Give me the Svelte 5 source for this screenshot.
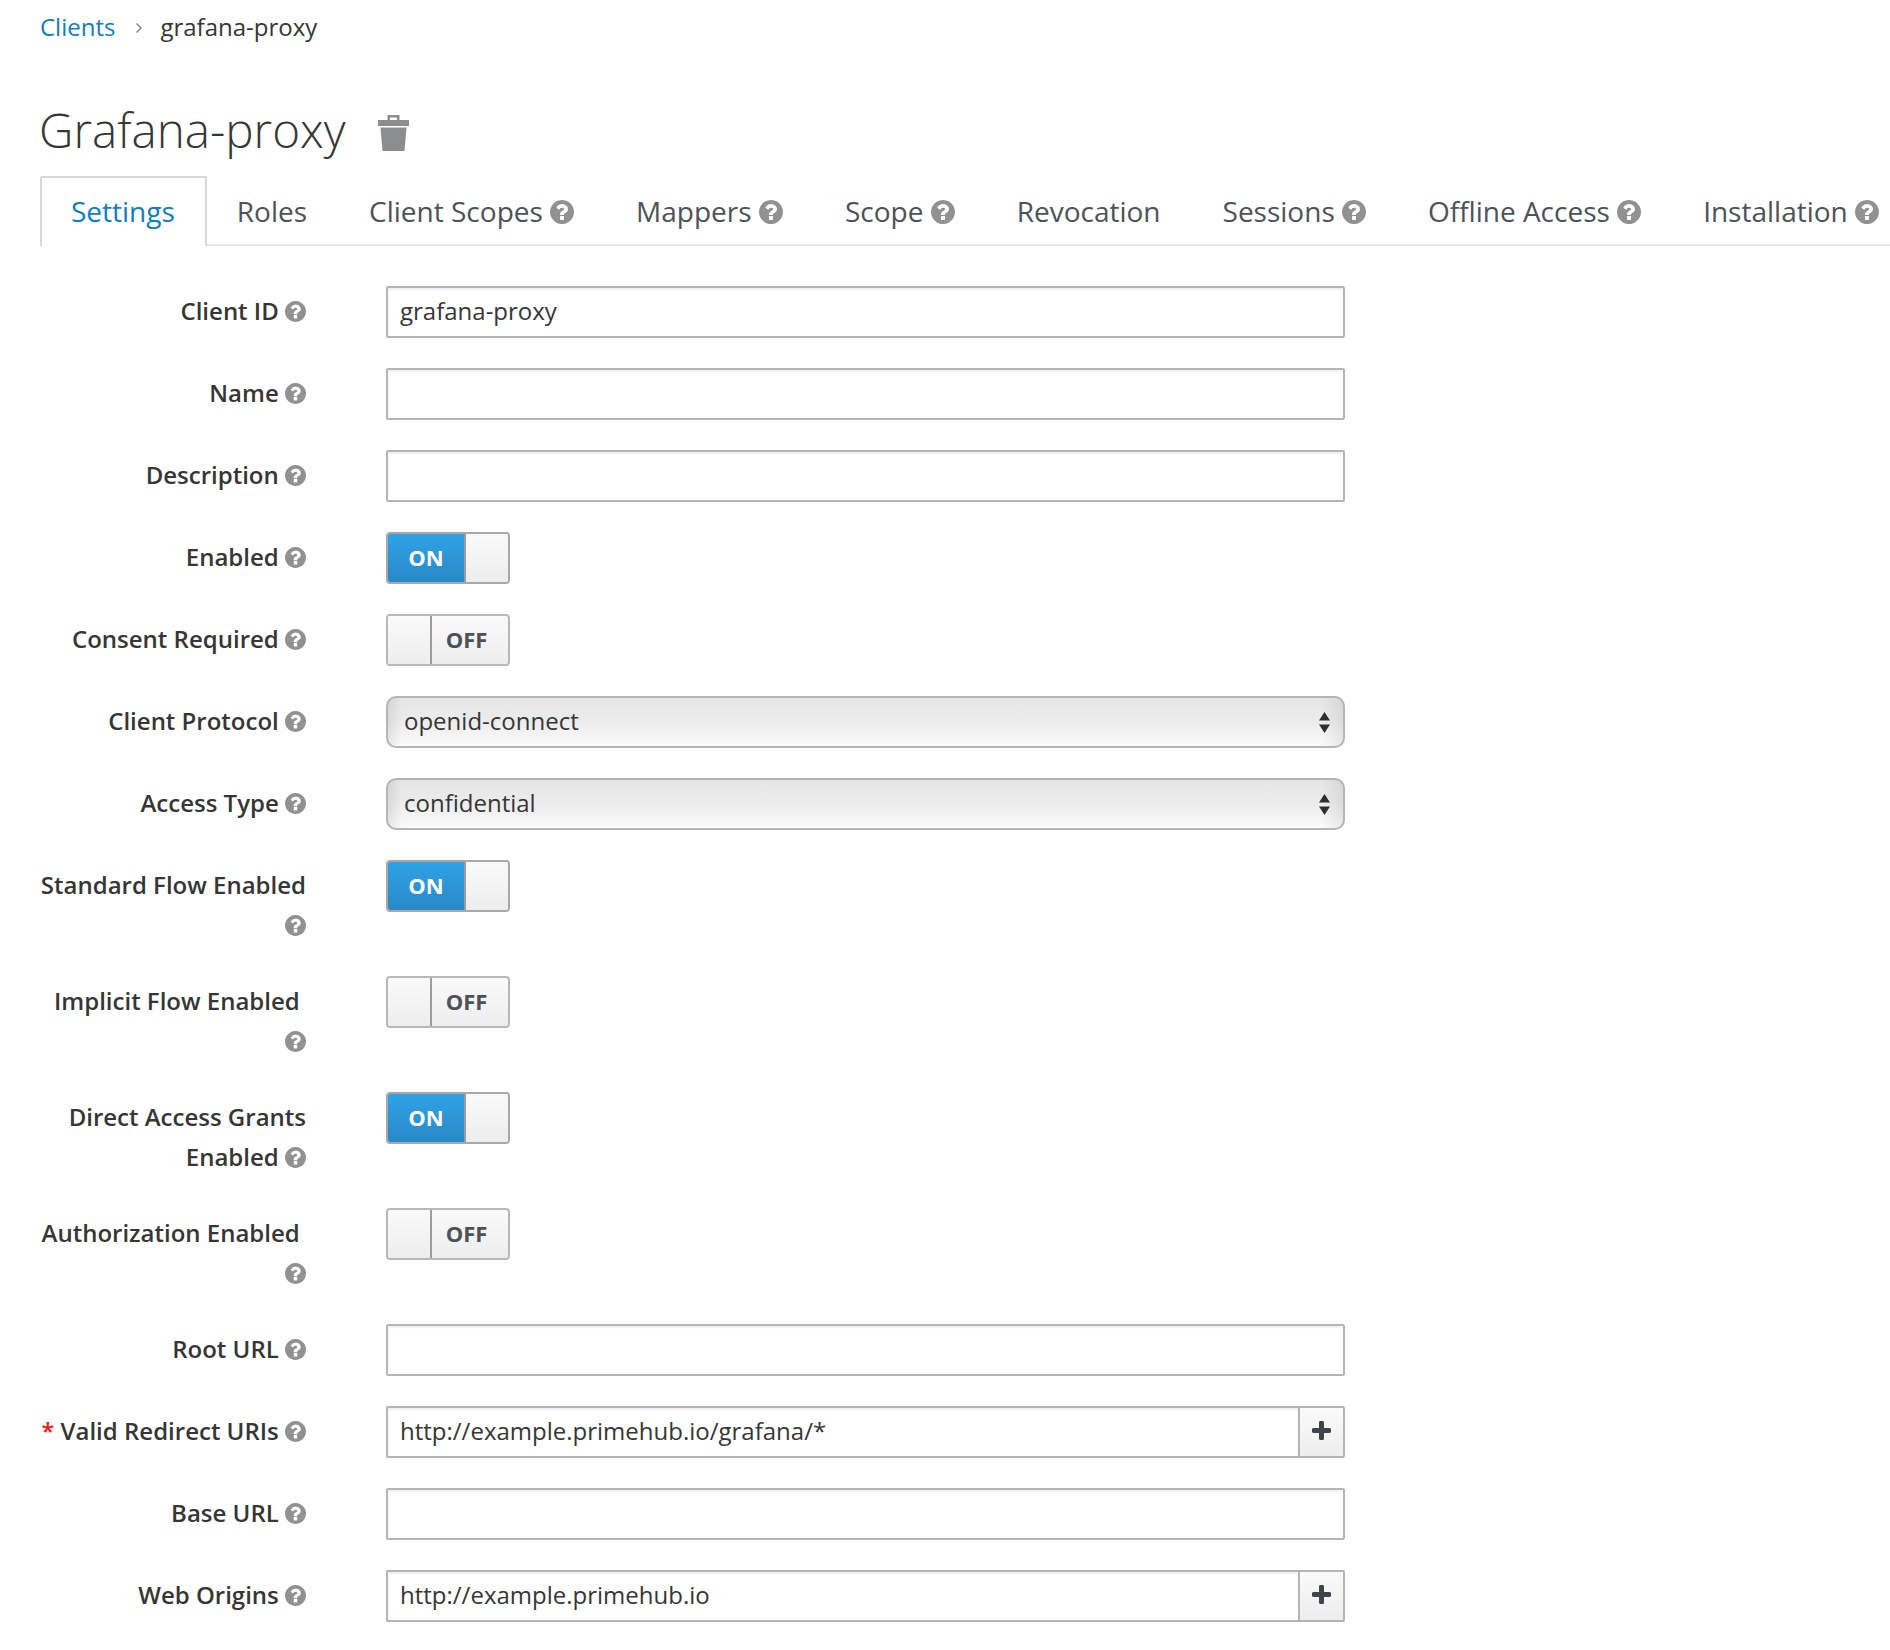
<script>
  const helpPath =
    "M1024 1376v-192q0-14-9-23t-23-9h-192q-14 0-23 9t-9 23v192q0 14 9 23t23 9h192q14 0 23-9t9-23zm256-672q0-88-55.5-163t-138.5-116-170-41q-243 0-371 213-15 24 8 42l132 100q7 6 19 6 16 0 25-12 53-68 86-92 34-24 86-24 48 0 85.5 26t37.5 59q0 38-20 61t-68 45q-63 28-115.5 86.5t-52.5 125.5v36q0 14 9 23t23 9h192q14 0 23-9t9-23q0-19 21.5-49.5t54.5-49.5q32-18 49-28.5t46-35 44.5-48 28-60.5 12.5-81zm384 192q0 209-103 385.5t-279.5 279.5-385.5 103-385.5-103-279.5-279.5-103-385.5 103-385.5 279.5-279.5 385.5-103 385.5 103 279.5 279.5 103 385.5z";

  const tabs = [
    { name: "Settings", active: true },
    { name: "Roles" },
    { name: "Client Scopes", help: true },
    { name: "Mappers", help: true },
    { name: "Scope", help: true },
    { name: "Revocation" },
    { name: "Sessions", help: true },
    { name: "Offline Access", help: true },
    { name: "Installation", help: true },
  ];

  const fields = [
    { label: "Client ID", type: "input", value: "grafana-proxy" },
    { label: "Name", type: "input", value: "" },
    { label: "Description", type: "input", value: "" },
    { label: "Enabled", type: "toggle", on: true },
    { label: "Consent Required", type: "toggle", on: false },
    { label: "Client Protocol", type: "select", value: "openid-connect" },
    { label: "Access Type", type: "select", value: "confidential" },
    { label: "Standard Flow Enabled", type: "toggle", on: true },
    { label: "Implicit Flow Enabled\u00a0", type: "toggle", on: false },
    { label: "Direct Access Grants Enabled", type: "toggle", on: true },
    { label: "Authorization Enabled\u00a0", type: "toggle", on: false },
    { label: "Root URL", type: "input", value: "" },
    { label: "Valid Redirect URIs", type: "multi", value: "http://example.primehub.io/grafana/*", required: true },
    { label: "Base URL", type: "input", value: "" },
    { label: "Web Origins", type: "multi", value: "http://example.primehub.io" },
  ];
</script>

{#snippet help(cls)}
  <svg class="help {cls}" viewBox="128 128 1536 1536" aria-hidden="true"><path d={helpPath} /></svg>
{/snippet}

<div class="page">
  <nav class="crumbs">
    <a href="#clients">Clients</a>
    <svg class="chevron" viewBox="0 0 8 12" aria-hidden="true"><path d="M1.5 1.5 6 6l-4.5 4.5" /></svg>
    <span>grafana-proxy</span>
  </nav>

  <div class="title">
    <h1>Grafana-proxy</h1>
    <svg class="trash" viewBox="0 0 31 37" aria-hidden="true">
      <path d="M9.5 6V1h12v5h-2.600V3.500h-6.800V6z" />
      <path d="M0 6h31v6H0z" />
      <path d="M2.500 13.500h26L26.500 37h-22z" />
    </svg>
  </div>

  <ul class="tabs">
    {#each tabs as tab}
      <li class:active={tab.active}>
        {tab.name}
        {#if tab.help}{@render help("tab-help")}{/if}
      </li>
    {/each}
  </ul>

  <form class="form">
    {#each fields as field}
      <div class="row">
        <label class="label">
          {#if field.required}<span class="req">*</span>{/if}
          {field.label}
          {@render help("label-help")}
        </label>

        {#if field.type === "input"}
          <input class="text" value={field.value} />
        {:else if field.type === "multi"}
          <div class="group">
            <input class="text" value={field.value} />
            <button type="button" class="add" aria-label="Add">
              <svg viewBox="0 0 19 19" aria-hidden="true"><path d="M9.500 2v15M2 9.500h15" /></svg>
            </button>
          </div>
        {:else if field.type === "select"}
          <div class="select">
            <span>{field.value}</span>
            <svg viewBox="0 0 11 21" aria-hidden="true">
              <path d="M5.500 0 11 8.500H0zM0 12.500h11L5.500 21z" />
            </svg>
          </div>
        {:else}
          <div class="toggle" class:on={field.on}>
            {#if field.on}
              <span class="state">ON</span>
              <span class="knob"></span>
            {:else}
              <span class="knob"></span>
              <span class="state">OFF</span>
            {/if}
          </div>
        {/if}
      </div>
    {/each}
  </form>
</div>

<style>
  :global(body) {
    margin: 0;
    background: #fff;
  }

  .page {
    width: 1890px;
    height: 1650px;
    overflow: hidden;
    box-sizing: border-box;
    padding: 7px 0 0 40px;
    font-family: "Open Sans", "Noto Sans", sans-serif;
    font-size: 24px;
    line-height: 40px;
    color: #363636;
  }

  .crumbs {
    display: flex;
    align-items: center;
    height: 40px;
  }
  .crumbs a {
    color: #0f7cc4;
    text-decoration: none;
  }
  .chevron {
    width: 8px;
    height: 12px;
    margin: 2px 17px 0 20px;
    fill: none;
    stroke: #8b8d8f;
    stroke-width: 1.500;
  }

  .title {
    display: flex;
    align-items: center;
    height: 64px;
    margin-top: 51px;
  }
  h1 {
    margin: 0 0 0 -1px;
    font-size: 47.600px;
    font-weight: 300;
    line-height: 64px;
  }
  .trash {
    width: 31px;
    height: 37px;
    margin: 4px 0 0 32px;
    fill: #8b8d8f;
  }

  .tabs {
    display: flex;
    margin: 14px 0 0;
    padding: 0;
    list-style: none;
    height: 70px;
    box-sizing: border-box;
    border-bottom: 2px solid #e6e6e6;
    font-size: 28px;
    color: #4d5258;
  }
  .tabs li {
    flex: none;
    height: 70px;
    box-sizing: border-box;
    padding: 0 29px;
    line-height: 66px;
    border: 2px solid transparent;
    border-bottom: 0;
    white-space: nowrap;
  }
  .tabs li.active {
    padding-right: 30px;
    margin-right: -1px;
    color: #0f7cc4;
    background: #fff;
    border-color: #d8d8d8;
    border-radius: 2px 2px 0 0;
  }

  .help {
    fill: #919191;
    vertical-align: -3px;
  }
  .tab-help {
    width: 24px;
    height: 24px;
    vertical-align: -2px;
  }
  .label-help {
    width: 21px;
    height: 21px;
    vertical-align: -2px;
  }

  .form {
    margin-top: 40px;
  }
  .row {
    display: flex;
    align-items: flex-start;
    margin-bottom: 30px;
  }
  .label {
    flex: none;
    width: 266px;
    margin-right: 80px;
    padding: 5px 0 1px;
    text-align: right;
    font-weight: 600;
  }
  .req {
    color: #f01c0d;
  }

  .text {
    flex: 1;
    width: 959px;
    max-width: 959px;
    height: 52px;
    box-sizing: border-box;
    margin: 0;
    padding: 0 12px 3px;
    border: 2px solid #b5b5b5;
    border-radius: 2px;
    box-shadow: inset 0 2px 2px rgba(3, 3, 3, 0.06);
    background: #fff;
    font: inherit;
    color: #363636;
    outline: none;
  }

  .group {
    display: flex;
    width: 959px;
  }
  .group .text {
    min-width: 0;
    border-right: 0;
    border-radius: 2px 0 0 2px;
  }
  .add {
    flex: none;
    display: flex;
    align-items: center;
    justify-content: center;
    width: 47px;
    height: 52px;
    padding: 0 0 3px;
    border: 2px solid #b5b5b5;
    border-radius: 0 2px 2px 0;
    background: linear-gradient(#fafafa, #ededed);
  }
  .add svg {
    width: 19px;
    height: 19px;
    fill: none;
    stroke: #3f444a;
    stroke-width: 5;
    stroke-linecap: round;
  }

  .select {
    display: flex;
    align-items: center;
    justify-content: space-between;
    width: 959px;
    height: 52px;
    box-sizing: border-box;
    padding: 0 13px 0 16px;
    border: 2px solid #b5b5b5;
    border-radius: 10px;
    background:
      linear-gradient(90deg, rgba(0, 0, 0, 0.08), transparent 14px, transparent calc(100% - 22px), rgba(0, 0, 0, 0.07)),
      linear-gradient(#e6e6e6, #ececec 50%, #fbfbfb);
  }
  .select span {
    padding-bottom: 3px;
  }
  .select svg {
    width: 11px;
    height: 21px;
    fill: #2e2e2e;
  }

  .toggle {
    display: flex;
    width: 124px;
    height: 52px;
    box-sizing: border-box;
    border: 2px solid #b8b8b8;
    border-radius: 4px;
    overflow: hidden;
    background: linear-gradient(#fafafa, #ededed);
    font-size: 22px;
    font-weight: 700;
    line-height: 46px;
    color: #4d5258;
  }
  .toggle.on {
    border-color: #a9a9a9;
  }
  .state {
    flex: 1;
    padding-right: 7px;
    text-align: center;
  }
  .toggle.on .state {
    padding-right: 0;
    color: #fff;
    background: linear-gradient(#2ea2e6, #2a89c8);
  }
  .knob {
    flex: none;
    width: 44px;
    box-sizing: border-box;
    background: linear-gradient(#fafafa, #ededed);
    border-right: 2px solid #9c9c9c;
  }
  .toggle.on .knob {
    border-right: 0;
    border-left: 2px solid #9c9c9c;
  }
</style>
